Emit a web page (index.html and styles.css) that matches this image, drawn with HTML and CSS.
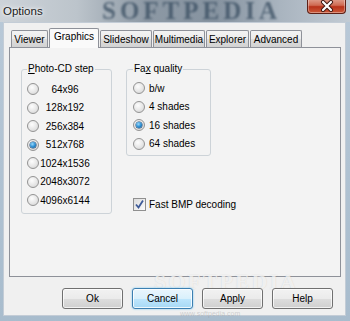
FILE: index.html
```html
<!DOCTYPE html>
<html lang="en">
<head>
    <meta charset="UTF-8">
    <title>Options</title>
    <link rel="stylesheet" href="styles.css">
</head>
<body>

<div class="window">
    <div class="titlebar">
        <span class="glass-mark">SOFTPEDIA</span>
        <span class="title">Options</span>
        <div class="close">
            <svg width="16" height="12" viewBox="0 0 16 12">
                <path d="M4 2 L12 10 M12 2 L4 10" stroke="#3a1510" stroke-width="4" stroke-linecap="round"/>
                <path d="M4 2 L12 10 M12 2 L4 10" stroke="#fff" stroke-width="2.2" stroke-linecap="round"/>
            </svg>
        </div>
    </div>

    <div class="client">
        <div class="tabs">
            <div class="tab w-viewer">Viewer</div>
            <div class="tab tab-active w-graphics">Graphics</div>
            <div class="tab w-slideshow">Slideshow</div>
            <div class="tab w-multimedia">Multimedia</div>
            <div class="tab w-explorer">Explorer</div>
            <div class="tab w-advanced">Advanced</div>
        </div>

        <div class="pane">
            <fieldset class="group photo-group">
                <legend><u>P</u>hoto-CD step</legend>
                <div class="row"><span class="radio"></span><span class="size">64x96</span></div>
                <div class="row"><span class="radio"></span><span class="size">128x192</span></div>
                <div class="row"><span class="radio"></span><span class="size">256x384</span></div>
                <div class="row"><span class="radio radio-on"></span><span class="size">512x768</span></div>
                <div class="row"><span class="radio"></span><span class="size">1024x1536</span></div>
                <div class="row"><span class="radio"></span><span class="size">2048x3072</span></div>
                <div class="row"><span class="radio"></span><span class="size">4096x6144</span></div>
            </fieldset>

            <div class="right-col">
                <fieldset class="group fax-group">
                    <legend>Fa<u>x</u> quality</legend>
                    <div class="row"><span class="radio"></span><span class="opt">b/w</span></div>
                    <div class="row"><span class="radio"></span><span class="opt">4 shades</span></div>
                    <div class="row"><span class="radio radio-on"></span><span class="opt">16 shades</span></div>
                    <div class="row"><span class="radio"></span><span class="opt">64 shades</span></div>
                </fieldset>

                <div class="check-row">
                    <span class="checkbox">
                        <svg width="11" height="11" viewBox="0 0 11 11">
                            <path d="M2 5.5 L4.5 8.5 L9 1.5" fill="none" stroke="#3d5a98" stroke-width="1.8"/>
                        </svg>
                    </span>
                    <span class="opt">Fast BMP decoding</span>
                </div>
            </div>
        </div>

        <div class="buttons">
            <span class="mark-big">SOFTPEDIA</span>
            <button class="btn">Ok</button>
            <button class="btn btn-focus">Cancel</button>
            <button class="btn">Apply</button>
            <button class="btn">Help</button>
        </div>
        <div class="mark-small">www.softpedia.com</div>
    </div>
</div>

</body>
</html>
```

FILE: styles.css
```css
/* Window frame */
body {
    margin: 0;
    width: 350px;
    height: 321px;
    overflow: hidden;
    font-family: 'Liberation Sans', Arial, sans-serif;
    font-size: 10px;
    color: #000;
    background: linear-gradient(to bottom, #b9c9d8, #a8bccd);
}

.window {
    display: flex;
    flex-direction: column;
    height: 321px;
}

.titlebar {
    position: relative;
    height: 22px;
    flex: none;
    overflow: hidden;
    background: linear-gradient(90deg, #cdd3d9 0%, #bcc4cb 22%, #8c98a4 42%, #8693a0 62%, #a9b4bf 80%, #c2cbd4 100%);
}

.title {
    position: relative;
    display: block;
    padding: 5px 0 0 3px;
    font-size: 11.5px;
    color: #1a1a1a;
    text-shadow: 0 0 6px #fff, 0 0 3px #fff;
}

.glass-mark {
    position: absolute;
    left: 102px;
    top: 0;
    font-family: 'Liberation Serif', serif;
    font-weight: bold;
    font-size: 25px;
    line-height: 21px;
    letter-spacing: 4px;
    color: #34495d;
    opacity: 0.7;
    filter: blur(1.3px);
}

.close {
    position: absolute;
    left: 307px;
    top: -1px;
    width: 39px;
    height: 15px;
    box-sizing: border-box;
    border: 1px solid #5e2016;
    border-top: none;
    border-radius: 0 0 4px 4px;
    background: linear-gradient(to bottom, #e0a08f 0%, #cf6a52 45%, #b8321a 55%, #cc5a3a 100%);
    box-shadow: inset 0 0 0 1px rgba(255, 255, 255, 0.35);
    display: flex;
    align-items: center;
    justify-content: center;
}

/* Client area */
.client {
    margin: 0 4px 0 3px;
    height: 294px;
    box-sizing: border-box;
    border: 1px solid #c3ccd6;
    background: #f0f0f0;
    padding-top: 5px;
}

.tabs {
    display: flex;
    align-items: flex-end;
    gap: 1px;
    padding-left: 7px;
    height: 20px;
}

.tab {
    box-sizing: border-box;
    height: 17px;
    margin-bottom: 1px;
    border: 1px solid #8e9199;
    border-bottom: none;
    border-radius: 2px 2px 0 0;
    background: linear-gradient(to bottom, #f3f3f3 0%, #ebebeb 50%, #dedede 51%, #d2d2d2 100%);
    text-align: center;
    line-height: 17px;
}

.tab-active {
    position: relative;
    z-index: 1;
    height: 20px;
    margin-bottom: 0;
    background: #fafafa;
    line-height: 16px;
}

.w-viewer { width: 37px; }
.w-graphics { width: 50px; }
.w-slideshow { width: 52px; }
.w-multimedia { width: 52px; }
.w-explorer { width: 43px; }
.w-advanced { width: 52px; }

.pane {
    margin: -1px 0 0 5px;
    width: 332px;
    height: 230px;
    box-sizing: border-box;
    border: 1px solid #8e9199;
    background: #f3f3f3;
    padding: 15px 0 0 11px;
    display: flex;
    align-items: flex-start;
    gap: 14px;
}

/* Group boxes */
.group {
    margin: 0;
    min-width: 0;
    box-sizing: border-box;
    border: 1px solid #cdd3d8;
    border-radius: 3px;
}

.group legend {
    margin-left: 0;
    padding: 0 1px;
    line-height: 12px;
}

.photo-group {
    width: 91px;
    padding: 5px 0 3px 5px;
}

.fax-group {
    width: 85px;
    padding: 4px 0 2px 6px;
}

.row {
    display: flex;
    align-items: center;
    height: 18.5px;
}

.size {
    width: 50px;
    margin-left: 1px;
    text-align: center;
}

.opt {
    margin-left: 4px;
}

.radio {
    position: relative;
    flex: none;
    width: 12px;
    height: 12px;
    box-sizing: border-box;
    border: 1px solid #939393;
    border-radius: 50%;
    background: radial-gradient(circle at 40% 35%, #fdfdfd 0%, #e6e6e6 55%, #cfcfcf 100%);
}

.radio-on::after {
    content: "";
    position: absolute;
    left: 2px;
    top: 2px;
    width: 6px;
    height: 6px;
    border-radius: 50%;
    background: radial-gradient(circle at 40% 35%, #9ad9fb 0%, #2d8fd3 50%, #0b4e86 100%);
    box-shadow: 0 0 0 0.5px #1a3e66;
}

.right-col {
    display: flex;
    flex-direction: column;
}

.check-row {
    display: flex;
    align-items: center;
    margin-top: 42px;
    padding-left: 7px;
    height: 13px;
}

.checkbox {
    flex: none;
    width: 13px;
    height: 13px;
    box-sizing: border-box;
    border: 1px solid #8f8f8f;
    background: linear-gradient(135deg, #dcdcdc, #fbfbfb);
    display: flex;
    align-items: center;
    justify-content: center;
}

.check-row .opt {
    margin-left: 3px;
}

/* Buttons */
.buttons {
    position: relative;
    display: flex;
    justify-content: flex-end;
    gap: 9px;
    margin-top: 11px;
    padding-right: 12px;
}

.btn {
    position: relative;
    width: 61px;
    height: 21px;
    padding: 0;
    box-sizing: border-box;
    border: 1px solid #707070;
    border-radius: 3px;
    font-family: 'Liberation Sans', Arial, sans-serif;
    font-size: 10px;
    color: #000;
    background: linear-gradient(to bottom, #f2f2f2 0%, #ebebeb 50%, #dddddd 51%, #cfcfcf 100%);
    box-shadow: inset 0 0 0 1px rgba(255, 255, 255, 0.7);
}

.btn-focus {
    border-color: #3c7fb1;
    background: linear-gradient(to bottom, #eaf6fd 0%, #d9f0fc 50%, #bee6fd 51%, #a7d9f5 100%);
    box-shadow: inset 0 0 0 1px rgba(255, 255, 255, 0.8), 0 0 2px #6cc4f5;
}

.mark-big {
    position: absolute;
    left: 150px;
    top: -12px;
    font-family: 'Liberation Serif', serif;
    font-weight: bold;
    font-size: 22px;
    line-height: 12px;
    letter-spacing: 2px;
    color: rgba(255, 255, 255, 0.7);
    text-shadow: 0 0 1px rgba(140, 140, 140, 0.35);
    pointer-events: none;
}

.mark-small {
    margin: 1px 0 0 176px;
    font-size: 7px;
    line-height: 8px;
    color: rgba(150, 150, 150, 0.4);
}
```
